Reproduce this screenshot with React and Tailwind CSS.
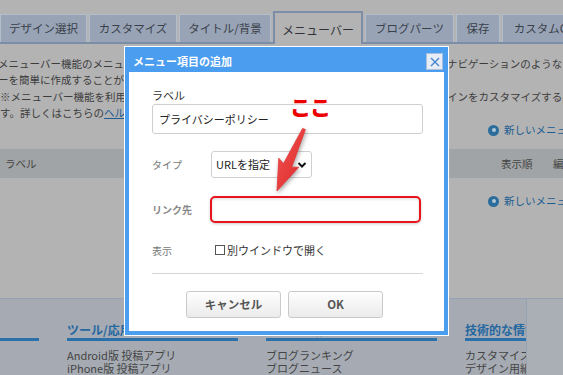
const tabs = [
  { name: "デザイン選択", w: "w-[87px]" },
  { name: "カスタマイズ", w: "w-[88px]" },
  { name: "タイトル/背景", w: "w-[92px]" },
  { name: "メニューバー", w: "w-[90px]", active: true },
  { name: "ブログパーツ", w: "w-[89px]" },
  { name: "保存", w: "w-[44px]" },
  { name: "カスタムCSS", w: "w-[90px]" },
];

const footerCols = [
  { title: "ブログの使い方", links: ["ヘルプ", "よくある質問"] },
  { title: "ツール/応用", links: ["Android版 投稿アプリ", "iPhone版 投稿アプリ"] },
  { title: "ブログ情報", links: ["ブログランキング", "ブログニュース"] },
  { title: "技術的な情報", links: ["カスタマイズ", "デザイン用紙"] },
];

function NewItem() {
  return (
    <div className="flex items-center gap-[5px] text-[#1d5d92]">
      <span className="flex h-[11px] w-[11px] items-center justify-center rounded-full bg-[#2a6d9c]">
        <span className="h-[4px] w-[4px] rounded-full bg-[#b3c6d4]" />
      </span>
      <span>新しいメニュー項目を追加</span>
    </div>
  );
}

export default function App() {
  return (
    <div className="relative h-[375px] w-[563px] overflow-hidden bg-[#b3b3b3] font-['Noto_Sans_CJK_JP',sans-serif] text-[10.5px] text-[#3c3c3c]">
      {/* タブ */}
      <div className="pt-[13px]">
        <div className="flex h-[31px] items-end gap-[2px] border-b-2 border-[#7c8da7] whitespace-nowrap">
          {tabs.map((t) =>
            t.active ? (
              <div
                key={t.name}
                className={`${t.w} relative -mb-[2px] flex h-[33px] shrink-0 items-center justify-center border-2 border-b-0 border-[#7c8da7] bg-[#b3b3b3] pt-[2px] text-[12px] text-[#30343a]`}
              >
                {t.name}
              </div>
            ) : (
              <div
                key={t.name}
                className={`${t.w} flex h-[28px] shrink-0 items-center justify-center border border-b-0 border-[#b4bdca] bg-[#98a4b6] text-[11.5px] text-[#3a404a]`}
              >
                {t.name}
              </div>
            )
          )}
        </div>
      </div>

      {/* 説明文 */}
      <div className="pt-[12px] leading-[16px] whitespace-nowrap">
        <div className="grid h-[16px] grid-cols-[447px_1fr] overflow-hidden">
          <span className="-ml-[2px] overflow-hidden">メニューバー機能のメニュー項目を追加すると、グローバル</span>
          <span>ナビゲーションのようなメニュ</span>
        </div>
        <div className="grid h-[16px] grid-cols-[447px_1fr] overflow-hidden">
          <span className="-ml-[2px] overflow-hidden">ーを簡単に作成することができます。</span>
          <span />
        </div>
        <div className="mt-[1px] grid h-[16px] grid-cols-[447px_1fr] overflow-hidden">
          <span className="overflow-hidden">※メニューバー機能を利用するには、ご利用中のデザ</span>
          <span>インをカスタマイズする必要</span>
        </div>
        <div className="grid h-[16px] grid-cols-[447px_1fr] overflow-hidden">
          <span className="overflow-hidden">
            す。詳しくはこちらの<span className="text-[#1d5d92] underline">ヘルプ</span>をご覧ください。
          </span>
          <span />
        </div>
        <div className="mt-[1px] flex h-[16px] pl-[488px]">
          <NewItem />
        </div>
      </div>

      {/* 一覧ヘッダー */}
      <div className="mt-[11px] flex h-[29px] items-center bg-[#a1a4a6] whitespace-nowrap text-[#444]">
        <span className="pl-[5px]">ラベル</span>
        <span className="ml-auto w-[52px]">表示順</span>
        <span className="w-[10px] overflow-hidden">編集</span>
      </div>
      <div className="mt-[15px] flex h-[16px] items-center pl-[488px] whitespace-nowrap leading-[16px]">
        <NewItem />
      </div>

      {/* フッター */}
      <div className="mt-[89px] flex h-[78px]">
        <div className="w-[527px] shrink-0 overflow-hidden border-t border-r border-[#95a2b3] bg-[#a6abb3]">
          <div className="-ml-[132px] flex gap-[28px] pt-[25px]">
            {footerCols.map((c) => (
              <div key={c.title} className="w-[171px] shrink-0 whitespace-nowrap">
                <div className="h-[17px] border-b-[3px] border-[#2a71ab] text-[12px] font-bold leading-[12px] text-[#2567a0]">
                  {c.title}
                </div>
                <div className="mt-[8px] text-[11px] leading-[13px] text-[#444]">
                  {c.links.map((l) => (
                    <div key={l}>{l}</div>
                  ))}
                </div>
              </div>
            ))}
          </div>
        </div>
        <div className="flex-1 border-t border-[#95a2b3] bg-[#aaaeb5]" />
      </div>

      {/* ダイアログ */}
      <div className="absolute top-[46px] left-[124px] h-[290px] w-[325px] border border-white bg-white">
        <div className="flex h-full flex-col border-4 border-[#4b9df0]">
          <div className="flex h-[21px] items-center justify-between bg-[#4b9df0] pr-[1px] pl-[4px]">
            <span className="text-[11px] font-bold text-white">メニュー項目の追加</span>
            <button className="flex h-[17px] w-[17px] items-center justify-center border border-[#a9bfdc] bg-[#e6edf7]">
              <svg width="10" height="10" viewBox="0 0 10 10">
                <path d="M1 1L9 9M9 1L1 9" stroke="#4a86cc" strokeWidth="1.4" />
              </svg>
            </button>
          </div>
          <div className="flex-1 bg-white pt-[15px] pr-[21px] pl-[23px]">
            <div className="h-[16px] text-[11px] leading-[16px] text-[#333]">ラベル</div>
            <div className="mt-[1px] flex h-[30px] items-center rounded-[3px] border border-[#cfcfcf] pl-[6px] text-[11px] text-[#222]">
              プライバシーポリシー
            </div>

            <div className="mt-[17px] flex items-center">
              <span className="w-[59px] text-[10px] text-[#777]">タイプ</span>
              <div className="flex h-[27px] w-[101px] items-center justify-between rounded-[3px] border border-[#cfcfcf] pr-[4px] pl-[4px] text-[11px] text-[#222]">
                <span>URLを指定</span>
                <svg width="10" height="8" viewBox="0 0 10 8">
                  <path d="M1.5 2L5 5.5L8.5 2" fill="none" stroke="#111" strokeWidth="2" />
                </svg>
              </div>
            </div>

            <div className="mt-[18px] flex items-center">
              <span className="w-[58px] text-[10px] font-bold text-[#888]">リンク先</span>
              <div className="h-[27px] w-[211px] rounded-[5px] border-2 border-[#e8141c] bg-white shadow-[inset_0_1px_3px_rgba(0,0,0,0.15),0_1px_3px_rgba(0,0,0,0.2)]" />
            </div>

            <div className="mt-[19px] flex h-[16px] items-center">
              <span className="w-[59px] text-[10px] text-[#777]">表示</span>
              <span className="ml-[4px] h-[10px] w-[10px] border border-[#555]" />
              <span className="ml-[2px] text-[11px] text-[#333]">別ウインドウで開く</span>
            </div>

            <div className="mt-[15px] h-px bg-[#d6d6d6]" />

            <div className="mt-[17px] flex gap-[7px] pl-[34px]">
              <button className="h-[27px] w-[95px] rounded-[3px] border border-[#cacaca] bg-gradient-to-b from-[#fefefe] to-[#ebebeb] text-[11.5px] font-bold text-[#555]">
                キャンセル
              </button>
              <button className="h-[27px] w-[95px] rounded-[3px] border border-[#cacaca] bg-gradient-to-b from-[#fefefe] to-[#ebebeb] text-[11.5px] font-bold text-[#555]">
                OK
              </button>
            </div>
          </div>
        </div>
      </div>

      {/* 注記 */}
      <div className="absolute top-[93px] left-[290px] text-[21px] leading-[26px] font-black tracking-[-1px] text-[#ee0000] [text-shadow:0_0_2px_#fff,0_0_3px_#fff]">
        ここ
      </div>
      <svg
        className="absolute top-[120px] left-[260px] drop-shadow-[1px_2px_2px_rgba(0,0,0,0.35)]"
        width="50"
        height="80"
        viewBox="0 0 50 80"
      >
        <defs>
          <linearGradient id="arw" x1="0" y1="0" x2="1" y2="1">
            <stop offset="0" stopColor="#f25555" />
            <stop offset="1" stopColor="#dc2626" />
          </linearGradient>
        </defs>
        <polygon
          points="45.4,9.6 31.7,47.2 38.8,47.2 17,71 18.8,38.2 23.5,43.6 42.6,8.4"
          fill="url(#arw)"
          strokeLinejoin="round"
          stroke="#e23a3a"
          strokeWidth="0.8"
        />
      </svg>
    </div>
  );
}
